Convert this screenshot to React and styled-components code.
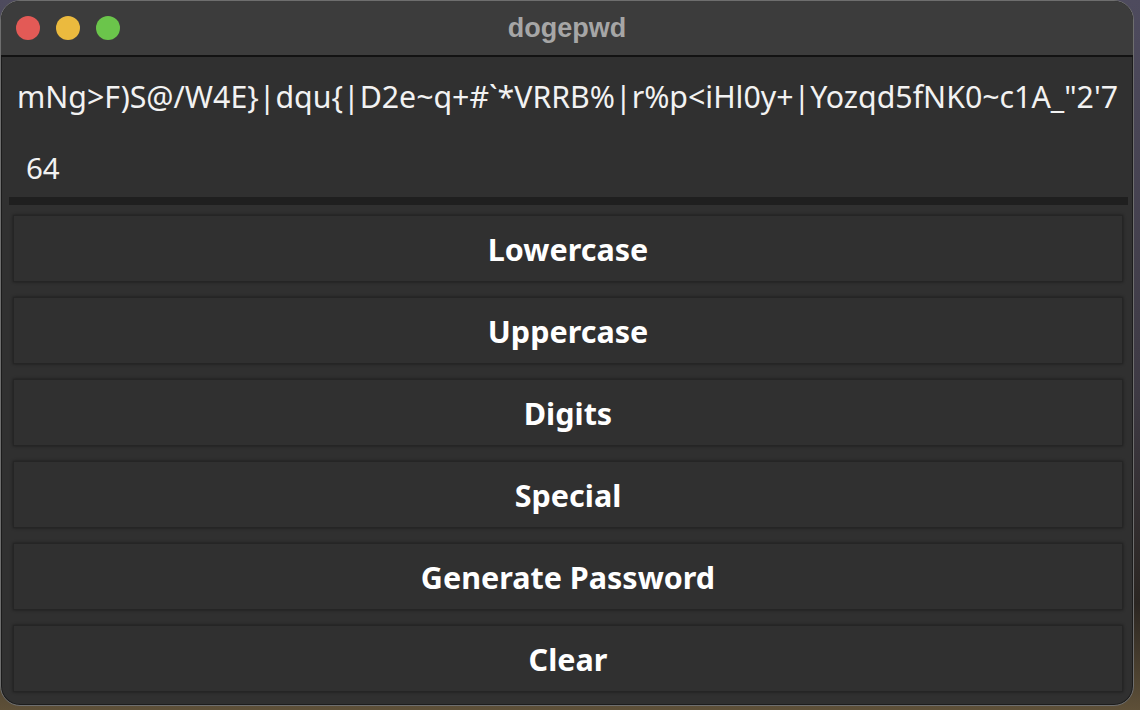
import React from "react";
import styled, { createGlobalStyle } from "styled-components";

const Global = createGlobalStyle`
  html, body { margin: 0; padding: 0; }
  body {
    width: 1140px;
    height: 710px;
    overflow: hidden;
    background: linear-gradient(180deg, #4e4b5e 0%, #3e3a44 55%, #2b2622 85%, #5e5038 100%);
    font-family: "Noto Sans", "Open Sans", sans-serif;
  }
`;

const Desktop = styled.div`
  width: 1140px;
  height: 710px;
  display: flex;
  align-items: flex-start;
`;

const Window = styled.div`
  width: 1134px;
  height: 706px;
  box-sizing: border-box;
  border-radius: 20px;
  border: 1px solid #6e6e6e;
  box-shadow: inset 0 0 0 1px #1c1c1c;
  background: #303030;
  overflow: hidden;
  display: flex;
  flex-direction: column;
`;

const TitleBar = styled.div`
  height: 56px;
  flex: none;
  box-sizing: border-box;
  background: #3c3c3c;
  border-bottom: 2px solid #121212;
  display: grid;
  grid-template-columns: 1fr auto 1fr;
  align-items: center;
  padding: 0 15px;
`;

const Lights = styled.div`
  display: flex;
  gap: 16px;
  align-items: center;
`;

const Light = styled.span`
  width: 24px;
  height: 24px;
  border-radius: 50%;
  background: ${(p) => p.$color};
  display: block;
`;

const Title = styled.div`
  font-family: "Liberation Sans", Arial, sans-serif;
  font-weight: 700;
  font-size: 27px;
  color: #a6a6a6;
`;

const Content = styled.div`
  flex: 1;
  display: flex;
  flex-direction: column;
  padding: 0 5px 0 7px;
`;

const Output = styled.div`
  height: 78px;
  display: flex;
  align-items: center;
  padding-left: 9px;
  font-size: 30.3px;
  color: #f2f2f2;
  white-space: nowrap;
`;

const Entry = styled.div`
  height: 70px;
  box-sizing: border-box;
  display: flex;
  align-items: center;
  padding: 2px 17px 0;
  border-bottom: 8px solid #1f1f1f;
  font-size: 29.5px;
  color: #f2f2f2;
  margin-left: 1px;
`;

const Buttons = styled.div`
  display: flex;
  flex-direction: column;
  gap: 15px;
  padding: 10px 5px 0 5px;
`;

const Button = styled.button`
  height: 67px;
  box-sizing: border-box;
  background: #303030;
  border: 1px solid #252525;
  box-shadow: 0 0 3px rgba(0, 0, 0, 0.45);
  color: #ffffff;
  font-family: "Noto Sans", "Open Sans", sans-serif;
  font-weight: 700;
  font-size: 30.5px;
  display: flex;
  align-items: center;
  justify-content: center;
  padding: 0;
  cursor: pointer;
`;

const password = `mNg>F)S@/W4E}|dqu{|D2e~q+#\`*VRRB%|r%p<iHl0y+|Yozqd5fNK0~c1A_"2'7`;

const labels = ["Lowercase", "Uppercase", "Digits", "Special", "Generate Password", "Clear"];

export default function App() {
  return (
    <Desktop>
      <Global />
      <Window>
        <TitleBar>
          <Lights>
            <Light $color="#e35a56" />
            <Light $color="#ebba3e" />
            <Light $color="#6bc54b" />
          </Lights>
          <Title>dogepwd</Title>
          <div />
        </TitleBar>
        <Content>
          <Output>{password}</Output>
          <Entry>64</Entry>
          <Buttons>
            {labels.map((l) => (
              <Button key={l}>{l}</Button>
            ))}
          </Buttons>
        </Content>
      </Window>
    </Desktop>
  );
}
